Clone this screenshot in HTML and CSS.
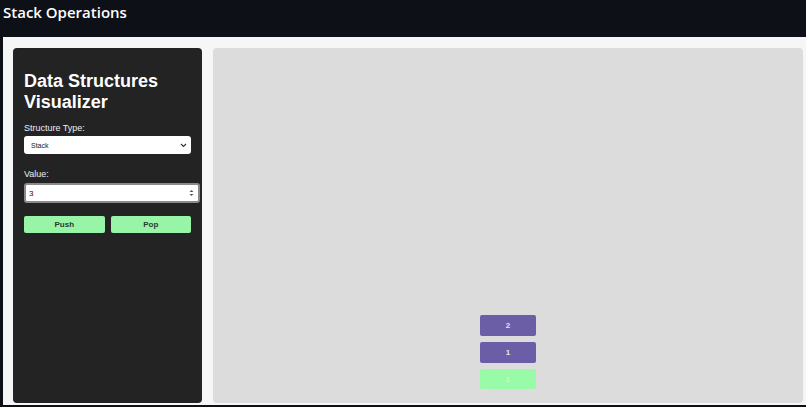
FILE: index.html
```html
<!DOCTYPE html>
<html>
<head>
<meta charset="utf-8">
<title>Stack Operations</title>
<link rel="stylesheet" href="styles.css">
</head>
<body>
<header class="topbar">Stack Operations</header>
<main class="page">
  <aside class="sidebar">
    <h2 class="title">Data Structures Visualizer</h2>
    <label class="label">Structure Type:</label>
    <div class="select">
      <span>Stack</span>
      <svg class="chev" width="7" height="5" viewBox="0 0 7 5"><path d="M1 1 L3.5 3.5 L6 1" fill="none" stroke="#333" stroke-width="1.1"/></svg>
    </div>
    <label class="label label-value">Value:</label>
    <div class="input">
      <span>3</span>
      <svg class="spin" width="5" height="8" viewBox="0 0 5 8"><path d="M0.5 3 L2.5 1 L4.5 3 Z M0.5 5 L2.5 7 L4.5 5 Z" fill="#555"/></svg>
    </div>
    <div class="buttons">
      <button class="btn">Push</button>
      <button class="btn">Pop</button>
    </div>
  </aside>
  <section class="canvas">
    <div class="node">2</div>
    <div class="node">1</div>
    <div class="node node-new">1</div>
  </section>
</main>
</body>
</html>
```
FILE: styles.css
```css
* { box-sizing: border-box; }
html, body { margin: 0; padding: 0; }
body {
  background: #0d1017;
  width: 806px;
  height: 407px;
  overflow: hidden;
  font-family: "Liberation Sans", Arial, sans-serif;
}
.topbar {
  height: 37px;
  padding: 2px 3px 0;
  color: #fff;
  font-family: "Open Sans", sans-serif;
  font-weight: 600;
  font-size: 15px;
  line-height: 20px;
}
.page {
  margin-left: 3px;
  height: 368px;
  background: #f6f6f6;
  display: flex;
  gap: 11px;
  padding: 11px 3px 2px 10px;
}
.sidebar {
  width: 189px;
  flex: none;
  background: #232323;
  border-radius: 4px;
  padding: 23px 11px 0;
  color: #fff;
  display: flex;
  flex-direction: column;
}
.title {
  margin: 0 0 10px;
  font-size: 18px;
  line-height: 21px;
  font-weight: bold;
}
.label {
  font-size: 9px;
  line-height: 11px;
  color: #eee;
  margin-bottom: 2px;
}
.label-value { margin-top: 15px; margin-bottom: 3px; }
.select {
  width: 167px;
  height: 18px;
  background: #fff;
  border-radius: 3px;
  display: flex;
  align-items: center;
  justify-content: space-between;
  padding: 0 4px 0 7px;
  color: #222;
  font-size: 7px;
}
.input {
  width: 176px;
  height: 20px;
  background: #fff;
  border: 2px solid #8a8a8a;
  border-radius: 3px;
  display: flex;
  align-items: center;
  justify-content: space-between;
  padding: 0 4px 0 3px;
  color: #111;
  font-size: 8px;
}
.buttons {
  display: flex;
  gap: 6px;
  width: 167px;
  margin-top: 13px;
}
.btn {
  flex: 1;
  height: 17px;
  border: none;
  border-radius: 2px;
  background: #98f5a8;
  color: #2a3a2e;
  font-family: "Liberation Sans", Arial, sans-serif;
  font-weight: bold;
  font-size: 8px;
  padding: 0;
}
.canvas {
  flex: 1;
  background: #dcdcdc;
  border-radius: 4px;
  display: flex;
  flex-direction: column;
  justify-content: flex-end;
  align-items: center;
  gap: 6px;
  padding-bottom: 14px;
}
.node {
  width: 56px;
  height: 21px;
  border-radius: 2px;
  background: #6c5ea6;
  color: #e6e3f2;
  font-size: 8px;
  font-weight: bold;
  display: flex;
  align-items: center;
  justify-content: center;
}
.node-new {
  background: #99fba8;
  color: #c7fbd0;
  height: 20px;
}
```
